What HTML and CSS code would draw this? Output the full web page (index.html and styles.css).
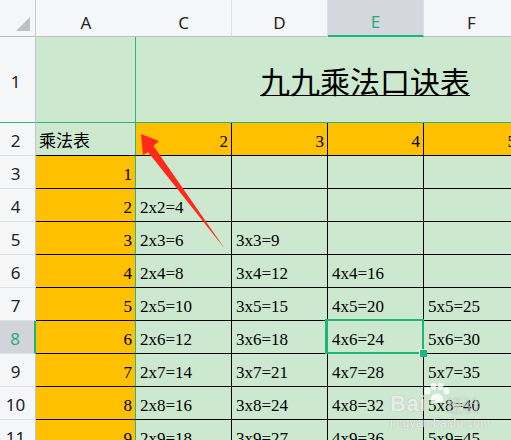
FILE: index.html
```html
<!DOCTYPE html>
<html lang="zh">
<head>
<meta charset="utf-8">
<title>九九乘法口诀表</title>
<link rel="stylesheet" href="styles.css">
</head>
<body>
<div class="sheet">
  <div class="corner"><span class="tri"></span></div>
  <div class="ch cha">A</div>
  <div class="ch">C</div>
  <div class="ch">D</div>
  <div class="ch chsel">E</div>
  <div class="ch">F</div>

  <div class="rh rh1">1</div>
  <div class="c r1 ca"></div>
  <div class="c r1 title"><span>九九乘法口诀表</span></div>

  <div class="rh">2</div>
  <div class="c ca cjk">乘法表</div>
  <div class="c o">2</div>
  <div class="c o">3</div>
  <div class="c o">4</div>
  <div class="c o">5</div>

  <div class="rh">3</div>
  <div class="c o ca">1</div>
  <div class="c"></div>
  <div class="c"></div>
  <div class="c"></div>
  <div class="c"></div>

  <div class="rh">4</div>
  <div class="c o ca">2</div>
  <div class="c">2x2=4</div>
  <div class="c"></div>
  <div class="c"></div>
  <div class="c"></div>

  <div class="rh">5</div>
  <div class="c o ca">3</div>
  <div class="c">2x3=6</div>
  <div class="c">3x3=9</div>
  <div class="c"></div>
  <div class="c"></div>

  <div class="rh">6</div>
  <div class="c o ca">4</div>
  <div class="c">2x4=8</div>
  <div class="c">3x4=12</div>
  <div class="c">4x4=16</div>
  <div class="c"></div>

  <div class="rh">7</div>
  <div class="c o ca">5</div>
  <div class="c">2x5=10</div>
  <div class="c">3x5=15</div>
  <div class="c">4x5=20</div>
  <div class="c">5x5=25</div>

  <div class="rh rsel">8</div>
  <div class="c o ca">6</div>
  <div class="c">2x6=12</div>
  <div class="c">3x6=18</div>
  <div class="c sel">4x6=24</div>
  <div class="c">5x6=30</div>

  <div class="rh">9</div>
  <div class="c o ca">7</div>
  <div class="c">2x7=14</div>
  <div class="c">3x7=21</div>
  <div class="c">4x7=28</div>
  <div class="c">5x7=35</div>

  <div class="rh">10</div>
  <div class="c o ca">8</div>
  <div class="c">2x8=16</div>
  <div class="c">3x8=24</div>
  <div class="c">4x8=32</div>
  <div class="c">5x8=40</div>

  <div class="rh">11</div>
  <div class="c o ca">9</div>
  <div class="c">2x9=18</div>
  <div class="c">3x9=27</div>
  <div class="c">4x9=36</div>
  <div class="c">5x9=45</div>

  <svg class="arrow" width="511" height="440" viewBox="0 0 511 440">
    <polygon points="141,134 159,141 153.5,146 225,249 148,152 143,155" fill="#ff2a1c"/>
  </svg>

  <div class="wm">
    <div class="wm-top">
      <span class="wm-bai">Bai</span>
      <svg class="wm-paw" width="26" height="20" viewBox="0 0 26 20">
        <ellipse cx="3.5" cy="8" rx="3" ry="3.6"/>
        <ellipse cx="9.5" cy="3.5" rx="3" ry="3.4"/>
        <ellipse cx="16.5" cy="3.5" rx="3" ry="3.4"/>
        <ellipse cx="22.5" cy="8" rx="3" ry="3.6"/>
        <path d="M13 10.5 C9 10.5 6 15 6.5 17.5 C7 19.5 10 19.5 13 19 C16 19.5 19 19.5 19.5 17.5 C20 15 17 10.5 13 10.5 Z"/>
      </svg>
      <span class="wm-jy">经验</span>
    </div>
    <div class="wm-url">jingyan.baidu.com</div>
  </div>
</div>
</body>
</html>
```

FILE: styles.css
```css
* {
  box-sizing: border-box;
}

html,
body {
  margin: 0;
  padding: 0;
  overflow: hidden;
  background: #ffffff;
}

.sheet {
  position: relative;
  display: grid;
  grid-template-columns: 36px 100px 96px 96px 96px 96px;
  grid-template-rows: 37px 86px repeat(10, 33px);
  width: 520px;
  font-family: "Liberation Serif", "Times New Roman", serif;
  font-size: 17px;
  color: #000;
}

/* corner */
.corner {
  background: #f5f6f8;
  border-right: 1px solid #c3c8d0;
  border-bottom: 1px solid #b9bec8;
  display: flex;
  align-items: flex-end;
  justify-content: flex-end;
  padding: 0 5px 5px 0;
}

.tri {
  width: 14px;
  height: 14px;
  background: #c0c0c0;
  clip-path: polygon(100% 0, 100% 100%, 0 100%);
}

/* column headers */
.ch {
  position: relative;
  background: #f5f6f8;
  border-right: 1px solid #dcdfe4;
  border-bottom: 1px solid #b9bec8;
  display: flex;
  align-items: center;
  justify-content: center;
  padding-top: 8px;
  font-family: "Noto Sans", "Liberation Sans", sans-serif;
  font-size: 17px;
  color: #222;
}

.cha {
  border-right: none;
}

.cha::after {
  content: "";
  position: absolute;
  right: -1px;
  top: 9px;
  bottom: -1px;
  width: 1px;
  background: #2db67c;
}

.chsel {
  background: #d4d7dd;
  color: #1fae76;
  border-bottom: 2px solid #1fb27a;
}

/* row headers */
.rh {
  background: #f5f6f8;
  border-right: 1px solid #c3c8d0;
  border-bottom: 1px solid #dde0e5;
  display: flex;
  align-items: center;
  justify-content: center;
  padding: 3px 4px 0 0;
  font-family: "Noto Sans", "Liberation Sans", sans-serif;
  font-size: 17px;
  color: #222;
}

.rh1 {
  border-bottom: 1px solid #2db67c;
}

.rsel {
  background: #d1d5db;
  color: #1fae76;
  border-right: 2px solid #1fb27a;
}

/* data cells */
.c {
  background: #cce8cf;
  border-right: 1px solid #000;
  border-bottom: 1px solid #000;
  display: flex;
  align-items: flex-end;
  padding: 0 3px 3px 4px;
  white-space: nowrap;
}

.o {
  background: #ffc000;
  justify-content: flex-end;
}

.ca {
  border-right: 1px solid #2db67c;
}

.cjk {
  font-family: "Noto Sans CJK SC", sans-serif;
  padding-left: 3px;
}

.r1 {
  border-bottom: 1px solid #2db67c;
}

.title {
  grid-column: span 4;
  border-right: none;
  align-items: center;
  padding: 0 0 0 124px;
  font-family: "Noto Sans CJK SC", sans-serif;
  font-size: 30px;
}

.title span {
  text-decoration: underline;
  text-decoration-thickness: 1px;
  text-underline-offset: 2px;
}

/* selected cell */
.sel {
  position: relative;
  z-index: 1;
}

.sel::after {
  content: "";
  position: absolute;
  left: -3px;
  top: -2px;
  right: -1px;
  bottom: -1px;
  border: 2px solid #1db67a;
  border-left-width: 3px;
}

.sel::before {
  content: "";
  position: absolute;
  right: -4px;
  bottom: -4px;
  width: 7px;
  height: 7px;
  background: #1db67a;
  border-top: 1px solid #ffffff;
  border-left: 1px solid #ffffff;
  z-index: 2;
}

/* overlays */
.arrow {
  position: absolute;
  left: 0;
  top: 0;
  z-index: 3;
  pointer-events: none;
}

.wm {
  position: absolute;
  left: 390px;
  top: 383px;
  z-index: 3;
  color: rgba(255, 255, 255, 0.8);
  font-family: "Liberation Sans", Arial, sans-serif;
  text-shadow: 0 0 1px rgba(110, 110, 110, 0.55);
  pointer-events: none;
}

.wm-top {
  display: flex;
  align-items: flex-end;
  height: 32px;
}

.wm-bai {
  font-size: 22px;
  font-weight: bold;
  line-height: 22px;
  letter-spacing: 0.5px;
}

.wm-paw {
  fill: rgba(255, 255, 255, 0.8);
  margin: 0 0 9px -2px;
  align-self: flex-start;
}

.wm-jy {
  font-family: "Noto Sans CJK SC", sans-serif;
  font-size: 17px;
  line-height: 20px;
  margin-left: -4px;
  color: rgba(255, 255, 255, 0.55);
}

.wm-url {
  font-size: 12px;
  line-height: 14px;
  margin-top: 1px;
  letter-spacing: 0.2px;
}
```
